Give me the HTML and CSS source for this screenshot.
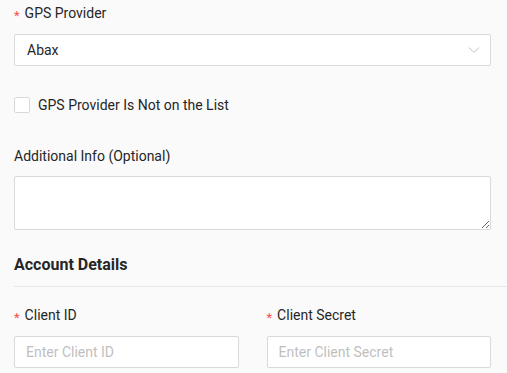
FILE: index.html
```html
<!DOCTYPE html>
<html>
<head>
<meta charset="utf-8">
<link rel="stylesheet" href="styles.css">
</head>
<body>
<div class="page">
  <div class="block">
    <div class="label"><span class="req">*</span>GPS Provider</div>
    <div class="select">
      <span class="value">Abax</span>
      <svg class="chev" width="12" height="8" viewBox="0 0 12 8"><path d="M1 1.5 L6 6.5 L11 1.5" fill="none" stroke="#bfbfbf" stroke-width="1"/></svg>
    </div>
  </div>

  <label class="check-row">
    <span class="checkbox"></span>
    <span class="check-text">GPS Provider Is Not on the List</span>
  </label>

  <div class="block info">
    <div class="label label-tight">Additional Info (Optional)</div>
    <textarea class="textarea"></textarea>
  </div>

  <h2 class="heading">Account Details</h2>
  <div class="divider"></div>

  <div class="cols">
    <div class="col">
      <div class="label"><span class="req">*</span>Client ID</div>
      <input class="input" placeholder="Enter Client ID">
    </div>
    <div class="col">
      <div class="label"><span class="req">*</span>Client Secret</div>
      <input class="input" placeholder="Enter Client Secret">
    </div>
  </div>
</div>
</body>
</html>
```

FILE: styles.css
```css
* { box-sizing: border-box; }
html, body { margin: 0; padding: 0; }
body {
  background: #fafafa;
  font-family: Roboto, "Liberation Sans", Arial, sans-serif;
  font-size: 14px;
  color: #262626;
}
.page {
  padding: 2px 0 0 14px;
}
.block, .check-row, .cols {
  margin-right: 16px;
}
.label {
  height: 22px;
  line-height: 22px;
  margin-bottom: 10px;
  color: #262626;
  white-space: nowrap;
}
.label-tight { margin-bottom: 9px; }
.req {
  color: #ff4d4f;
  font-size: 13px;
  display: inline-block;
  vertical-align: -2px;
  margin-right: 5px;
}
.select {
  height: 32px;
  background: #fff;
  border: 1px solid #d9d9d9;
  border-radius: 2px;
  display: flex;
  align-items: center;
  justify-content: space-between;
  padding: 0 10px 0 12px;
}
.value { color: #262626; }
.chev { display: block; }
.check-row {
  display: flex;
  align-items: center;
  height: 22px;
  margin-top: 28px;
}
.checkbox {
  width: 16px;
  height: 16px;
  background: #fff;
  border: 1px solid #d9d9d9;
  border-radius: 2px;
  margin-right: 8px;
  flex: none;
}
.check-text { color: #262626; }
.info { margin-top: 29px; }
.textarea {
  display: block;
  width: 100%;
  height: 54px;
  background: #fff;
  border: 1px solid #d9d9d9;
  border-radius: 2px;
  margin: 0;
  padding: 4px 11px;
  font: inherit;
  outline: none;
}
.heading {
  margin: 23px 0 9px 0;
  font-size: 16px;
  line-height: 24px;
  font-weight: 700;
  color: #262626;
}
.divider {
  height: 1px;
  background: #e8e8e8;
}
.cols {
  margin-top: 17px;
  display: grid;
  grid-template-columns: 1fr 1fr;
  column-gap: 28px;
}
.input {
  display: block;
  width: 100%;
  height: 32px;
  background: #fff;
  border: 1px solid #d9d9d9;
  border-radius: 2px;
  padding: 0 11px;
  font: inherit;
  color: #262626;
  outline: none;
}
.input::placeholder { color: #bfbfbf; }
```
